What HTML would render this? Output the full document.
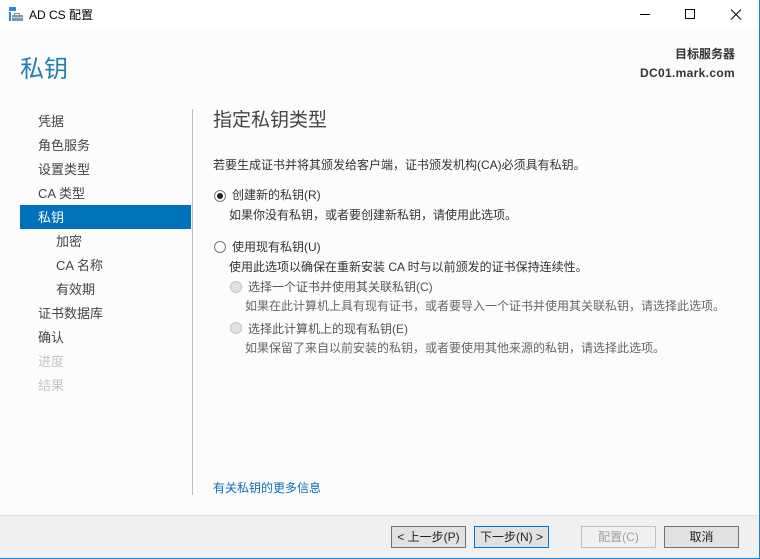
<!DOCTYPE html>
<html><head><meta charset="utf-8"><style>
html,body{margin:0;padding:0}
body{width:760px;height:559px;position:relative;overflow:hidden;background:#fcfcfc;font-family:"Liberation Sans","Noto Sans CJK SC",sans-serif;font-size:12px;color:#333}
.t{position:absolute;white-space:nowrap;line-height:16px}
.n{font-size:13px;color:#444;line-height:18px}
.r{position:absolute;width:10px;height:10px;border-radius:50%;border:1px solid #777;background:#fff}
.rd{border-color:#c4c4c4;background:#e2e2e2}
.d{color:#555}
.e{color:#666}
.b{position:absolute;top:526px;width:73px;height:20px;border:1px solid #707070;background:#e1e1e1;text-align:center;font-size:12px;line-height:20px;color:#222;white-space:nowrap}
</style></head><body>
<div style="position:absolute;left:0;top:0;width:760px;height:30px;background:#fff"></div>
<svg style="position:absolute;left:0;top:0" width="760" height="30">
<rect x="9" y="7" width="7" height="4" fill="#2b87d8"/><rect x="9" y="12" width="2" height="9" fill="#2b87d8"/>
<rect x="12" y="15" width="11" height="6" fill="#7a97b0"/>
<path d="M14.500 15v-1.500h5V15" fill="none" stroke="#6f8aa3"/><rect x="12" y="17" width="11" height="1" fill="#c5d2dd"/>
<path d="M640 14.500h10" stroke="#000"/><rect x="685.500" y="9.500" width="9" height="9" fill="none" stroke="#000"/>
<path d="M731 9.500l10 10M741 9.500l-10 10" stroke="#000" fill="none"/>
</svg>
<div class="t" style="left:29px;top:7px;color:#000">AD CS 配置</div>
<div class="t" style="left:20px;top:54px;font-size:24px;line-height:32px;color:#1f7fb0">私钥</div>
<div class="t" style="right:25px;top:46px;font-weight:bold;color:#333">目标服务器</div>
<div class="t" style="right:25px;top:65px;font-weight:bold;color:#333;letter-spacing:.33px">DC01.mark.com</div>

<div class="t n" style="left:38px;top:113px">凭据</div>
<div class="t n" style="left:38px;top:137px">角色服务</div>
<div class="t n" style="left:38px;top:161px">设置类型</div>
<div class="t n" style="left:38px;top:185px">CA 类型</div>
<div style="position:absolute;left:20px;top:205px;width:171px;height:24px;background:#0072bc"></div>
<div class="t n" style="left:38px;top:209px;color:#fff">私钥</div>
<div class="t n" style="left:56px;top:233px">加密</div>
<div class="t n" style="left:56px;top:257px">CA 名称</div>
<div class="t n" style="left:56px;top:281px">有效期</div>
<div class="t n" style="left:38px;top:305px">证书数据库</div>
<div class="t n" style="left:38px;top:329px">确认</div>
<div class="t n" style="left:38px;top:353px;color:#c4c4c4">进度</div>
<div class="t n" style="left:38px;top:377px;color:#c4c4c4">结果</div>
<div style="position:absolute;left:192px;top:109px;width:1px;height:386px;background:#bdbdbd"></div>

<div class="t" style="left:213px;top:109px;font-size:19px;line-height:24px;color:#444">指定私钥类型</div>
<div class="t" style="left:213px;top:157px">若要生成证书并将其颁发给客户端，证书颁发机构(CA)必须具有私钥。</div>

<div class="r" style="left:214px;top:190px"></div><div style="position:absolute;left:217px;top:193px;width:6px;height:6px;border-radius:50%;background:#222"></div>
<div class="t" style="left:232px;top:187px">创建新的私钥(R)</div>
<div class="t" style="left:229px;top:207px">如果你没有私钥，或者要创建新私钥，请使用此选项。</div>

<div class="r" style="left:214px;top:241px"></div>
<div class="t" style="left:232px;top:239px">使用现有私钥(U)</div>
<div class="t" style="left:229px;top:259px">使用此选项以确保在重新安装 CA 时与以前颁发的证书保持连续性。</div>

<div class="r rd" style="left:230px;top:281px"></div>
<div class="t d" style="left:248px;top:279px">选择一个证书并使用其关联私钥(C)</div>
<div class="t e" style="left:245px;top:298px">如果在此计算机上具有现有证书，或者要导入一个证书并使用其关联私钥，请选择此选项。</div>

<div class="r rd" style="left:230px;top:322px"></div>
<div class="t d" style="left:248px;top:321px">选择此计算机上的现有私钥(E)</div>
<div class="t e" style="left:245px;top:340px">如果保留了来自以前安装的私钥，或者要使用其他来源的私钥，请选择此选项。</div>

<div class="t" style="left:213px;top:480px;color:#0f6cbd">有关私钥的更多信息</div>

<div style="position:absolute;left:0;top:515px;width:760px;height:1px;background:#dfdfdf"></div>
<div style="position:absolute;left:0;top:516px;width:760px;height:42px;background:#f0f0f0"></div>
<div style="position:absolute;left:0;top:558px;width:760px;height:1px;background:#1883d7"></div>
<div style="position:absolute;left:759px;top:0;width:1px;height:559px;background:#1883d7"></div>

<div class="b" style="left:391px">&lt; 上一步(P)</div>
<div class="b" style="left:474px;border-color:#0078d7">下一步(N) &gt;</div>
<div class="b" style="left:581px;border-color:#bfbfbf;background:#f0f0f0;color:#a0a0a0">配置(C)</div>
<div class="b" style="left:664px">取消</div>
</body></html>
